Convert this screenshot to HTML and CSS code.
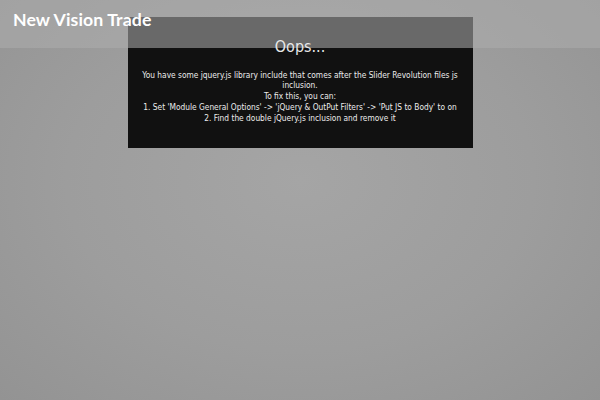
FILE: index.html
```html
<!DOCTYPE html>
<html>
<head>
<meta charset="utf-8">
<link rel="stylesheet" href="styles.css">
</head>
<body>
<header class="site-header">
  <div class="logo">New Vision Trade</div>
</header>
<main class="stage">
  <div class="error-box">
    <div class="error-title">Oops...</div>
    <div class="error-text">
      You have some jquery.js library include that comes after the Slider Revolution files js inclusion.<br>
      To fix this, you can:<br>
      1. Set 'Module General Options' -&gt; 'jQuery &amp; OutPut Filters' -&gt; 'Put JS to Body' to on<br>
      2. Find the double jQuery.js inclusion and remove it
    </div>
  </div>
</main>
</body>
</html>
```
FILE: styles.css
```css
html, body {
  margin: 0;
  padding: 0;
  height: 100%;
}
body {
  background: radial-gradient(ellipse at 50% 45%, #a5a5a5 0%, #9d9d9d 55%, #939393 100%);
  font-family: "DejaVu Sans", sans-serif;
  overflow: hidden;
}
.site-header {
  position: absolute;
  top: 0;
  left: 0;
  right: 0;
  height: 48px;
  background: rgba(172, 172, 172, 0.57);
  z-index: 2;
}
.logo {
  font-family: "Lato", "Liberation Sans", sans-serif;
  font-weight: 700;
  font-size: 17.7px;
  color: #ffffff;
  padding: 10px 0 0 13px;
  line-height: 20px;
  letter-spacing: 0.1px;
}
.stage {
  display: flex;
  justify-content: center;
  padding-top: 17px;
}
.error-box {
  width: 345px;
  height: 131px;
  box-sizing: border-box;
  background: #111111;
  color: #eeeeee;
  text-align: center;
  padding-top: 20px;
}
.error-title {
  font-family: "DejaVu Sans Condensed", "DejaVu Sans", sans-serif;
  font-size: 16px;
  line-height: 20px;
  position: relative;
  z-index: 3;
  color: #e8e8e8;
}
.error-text {
  margin-top: 12.5px;
  font-family: "DejaVu Sans Condensed", "DejaVu Sans", sans-serif;
  font-size: 8.3px;
  line-height: 10.8px;
  color: #ececec;
  padding: 0 8px;
}
```
